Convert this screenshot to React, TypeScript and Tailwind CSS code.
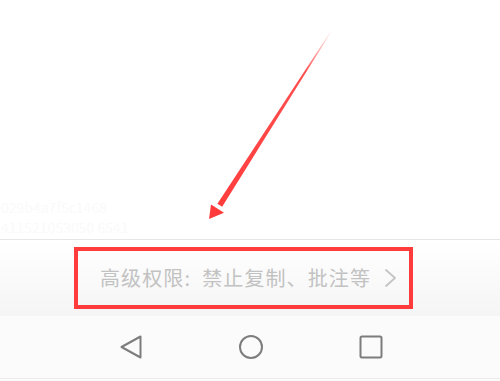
import React from "react";

const cjk = { fontFamily: '"Noto Sans CJK SC", "Noto Sans", sans-serif' };

function Arrow() {
  // annotation arrow drawn over the page
  return (
    <svg className="absolute left-0 top-0 pointer-events-none" width={500} height={381} viewBox="0 0 500 381">
      <defs>
        <linearGradient id="fade" x1="332" y1="30" x2="209" y2="219" gradientUnits="userSpaceOnUse">
          <stop offset="0" stopColor="#ff3b3b" stopOpacity="0" />
          <stop offset="0.22" stopColor="#ff3b3b" stopOpacity="0.9" />
          <stop offset="1" stopColor="#ff3b3b" stopOpacity="1" />
        </linearGradient>
      </defs>
      <polygon points="332.3,30.2 331.7,29.8 217.4,203.8 222.2,206.8" fill="url(#fade)" />
      <polygon points="209,219 211,204.5 224,212.8" fill="#ff3b3b" />
    </svg>
  );
}

export default function App() {
  return (
    <div className="relative w-[500px] h-[381px] bg-white overflow-hidden" style={cjk}>
      <div className="h-[239px] flex flex-col justify-end pb-[2px] pl-[1px] text-[14px] leading-[20px] text-[#fafafa]">
        <span>029b4a7f5c1468</span>
        <span>411521053050 6541</span>
      </div>
      <div className="h-px bg-[#e6e6e6]" />
      <div className="h-[76px] bg-gradient-to-b from-white to-[#f5f5f5] pt-[7px]">
        <div className="ml-[74px] w-[339px] h-[62px] border-[4px] border-[#ff3b3b] flex items-center pl-[22px] pr-[11px]">
          <span className="text-[20px] leading-[24px] text-[#c2c2c2] tracking-[1.1px] whitespace-nowrap">
            高级权限:&nbsp; 禁止复制、批注等
          </span>
          <svg className="ml-auto" width={14} height={20} viewBox="0 0 14 20">
            <path d="M2 2 L11 10 L2 18" fill="none" stroke="#c4c4c4" strokeWidth={1.8} strokeLinecap="round" strokeLinejoin="round" />
          </svg>
        </div>
      </div>
      <div className="h-[63px] bg-[#fbfbfb] border-b border-[#ececec] flex items-center pl-[119px] gap-[96px]">
        <svg width={24} height={26} viewBox="0 0 24 26">
          <path d="M2.5 13 L21.5 2.5 L21.5 23.5 Z" fill="none" stroke="#7d7d7d" strokeWidth={2} strokeLinejoin="round" />
        </svg>
        <svg width={24} height={24} viewBox="0 0 24 24">
          <circle cx={12} cy={12} r={11} fill="none" stroke="#7d7d7d" strokeWidth={2} />
        </svg>
        <svg width={24} height={24} viewBox="0 0 24 24">
          <rect x={1.5} y={1.5} width={21} height={21} rx={1.5} fill="none" stroke="#7d7d7d" strokeWidth={2} />
        </svg>
      </div>
      <div className="h-[2px] bg-[#fbfbfb]" />
      <Arrow />
    </div>
  );
}
